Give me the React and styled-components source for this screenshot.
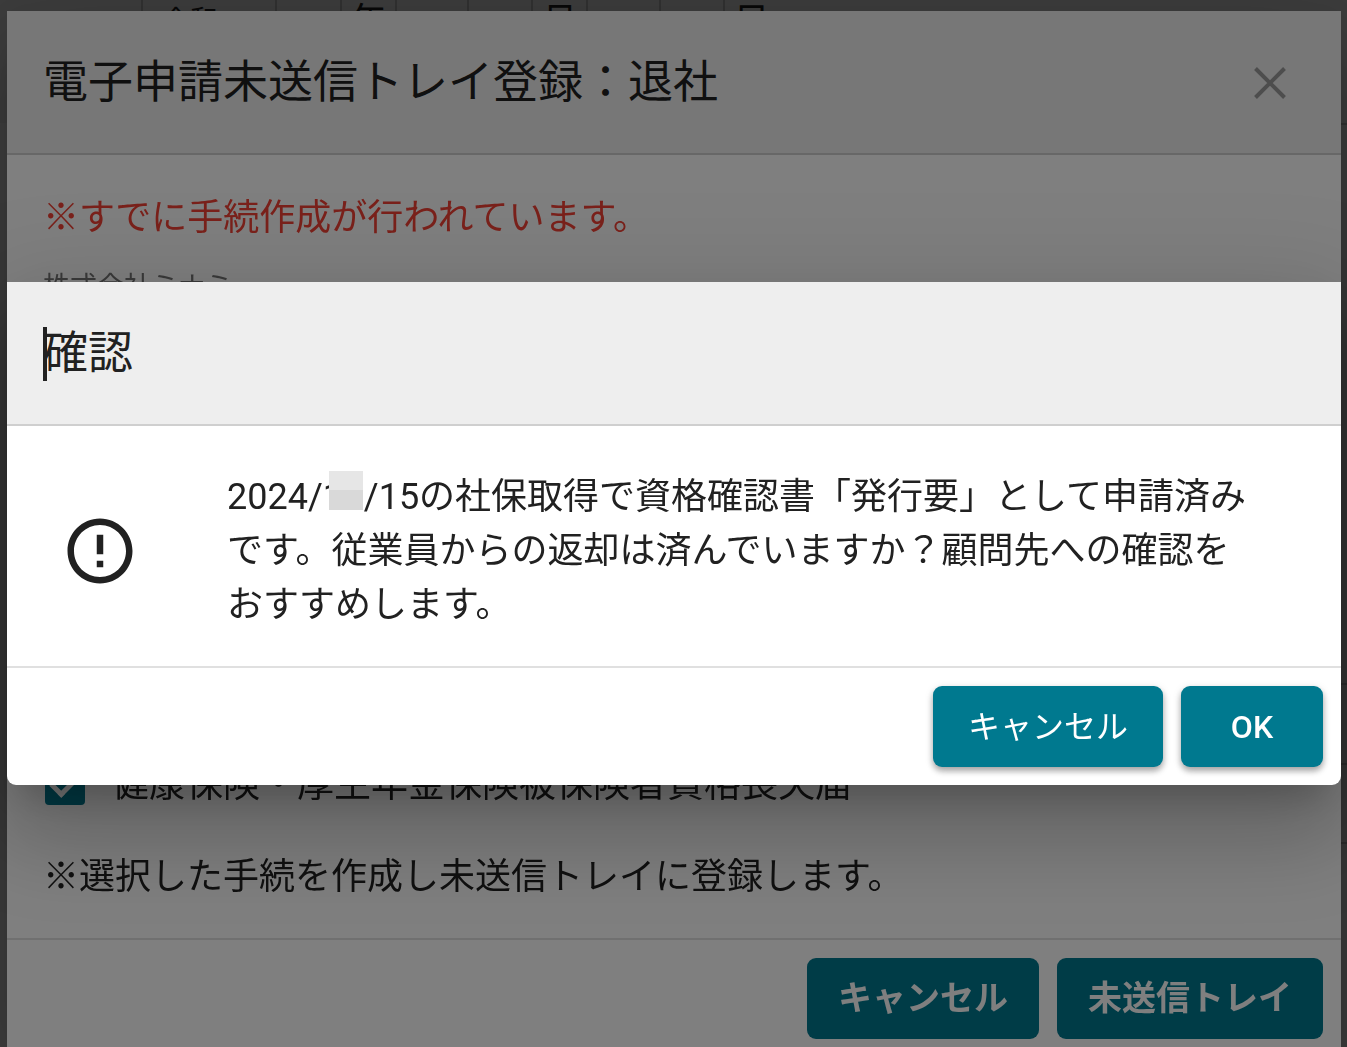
import React from 'react';
import styled, { createGlobalStyle } from 'styled-components';

const GlobalStyle = createGlobalStyle`
  * {
    box-sizing: border-box;
  }
  body {
    margin: 0;
    background: #fff;
    color: #212121;
    font-family: Roboto, "Noto Sans CJK JP", sans-serif;
    font-size: 36px;
    line-height: 54px;
  }
`;

const Page = styled.div`
  height: 100vh;
  overflow: hidden;
`;

const DateRow = styled.div`
  display: flex;
  height: 123px;
  padding-left: 141px;
  background: #f3f3f3;
  line-height: 44px;
`;

const DateCell = styled.div`
  width: ${({ $width }) => $width}px;
  height: 50px;
  padding-left: ${({ $era }) => ($era ? 19 : 0)}px;
  border-left: 2px solid #c4c4c4;
  font-size: ${({ $era }) => ($era ? 28 : 36)}px;
  text-align: ${({ $era }) => ($era ? 'left' : 'center')};
`;

const PageRow = styled.div`
  height: ${({ $height }) => $height}px;
  margin-left: 7px;
  border-top: 2px solid #c4c4c4;
  background: #f3f3f3;
`;

const Overlay = styled.div`
  position: fixed;
  inset: 0;
  display: flex;
  flex-direction: column;
  justify-content: ${({ $center }) => ($center ? 'center' : 'flex-start')};
  padding: ${({ $center }) => ($center ? '20px 6px 0 7px' : '11px 6px 0 7px')};
  background: rgba(0, 0, 0, 0.5);
  overflow: hidden;
`;

const Dialog = styled.section`
  display: flex;
  flex-direction: column;
  flex: ${({ $fill }) => ($fill ? '1' : 'none')};
  background: #fff;
  border-radius: ${({ $fill }) => ($fill ? '0' : '0 0 9px 9px')};
  box-shadow: 0 25px 34px -16px rgba(0, 0, 0, 0.2),
    0 54px 85px 7px rgba(0, 0, 0, 0.14),
    0 20px 103px 18px rgba(0, 0, 0, 0.12);
`;

const DialogHeader = styled.header`
  display: flex;
  justify-content: space-between;
  align-items: center;
  height: 144px;
  padding: 2px 44px 0 36px;
  background: #eee;
  border-bottom: 2px solid #cfcfcf;
`;

const Title = styled.h2`
  margin: 0;
  font-size: 45px;
  font-weight: 400;
  line-height: 54px;
`;

const Caret = styled.span`
  position: absolute;
  width: 4px;
  height: 54px;
  background: #212121;
`;

const CloseButton = styled.button`
  display: flex;
  padding: 0;
  border: 0;
  background: none;
  color: #9b9b9b;
`;

const FormBody = styled.div`
  display: flex;
  flex: 1;
  flex-direction: column;
  padding: 36px 36px 34px;
`;

const Warning = styled.p`
  margin: 0;
  color: #f44336;
`;

const Company = styled.p`
  margin: 22px 0 auto;
  color: #757575;
  font-size: 27px;
  line-height: 40px;
`;

const CheckRow = styled.label`
  display: flex;
  align-items: center;
  gap: 27px;
  margin-bottom: 38px;
  font-size: 37px;
`;

const Checkbox = styled.input`
  appearance: none;
  width: 40px;
  height: 40px;
  margin: 0 0 0 2px;
  border-radius: 4px;
  background: #00798f;
  display: grid;
  place-items: center;
  &:checked::before {
    content: "";
    width: 12px;
    height: 24px;
    margin-bottom: 8px;
    border: solid #fff;
    border-width: 0 5px 5px 0;
    transform: rotate(45deg);
  }
`;

const Note = styled.p`
  margin: 0;
`;

const DialogFooter = styled.footer`
  display: flex;
  justify-content: flex-end;
  gap: 18px;
  padding: 18px 18px ${({ $tight }) => ($tight ? 8 : 18)}px;
  border-top: 2px solid #e0e0e0;
`;

const Button = styled.button`
  min-width: 142px;
  height: 81px;
  padding: 0 ${({ $strong }) => ($strong ? 31 : 35)}px ${({ $medium }) => ($medium ? 0 : 6)}px;
  border: 0;
  border-radius: 9px;
  background: #00798f;
  color: #fff;
  font-family: inherit;
  font-size: ${({ $strong }) => ($strong ? 34 : 32)}px;
  font-weight: ${({ $strong, $medium }) => ($strong ? 700 : $medium ? 500 : 400)};
  box-shadow: ${({ $strong }) =>
    $strong ? 'none' : '0 4px 6px rgba(0, 0, 0, 0.3), 0 2px 10px rgba(0, 0, 0, 0.12)'};
`;

const MessageBody = styled.div`
  display: flex;
  align-items: center;
  gap: 88px;
  padding: 44px 80px 34px 54px;
`;

const Message = styled.p`
  flex: 1;
  margin: 0;
`;

const MaskedMonth = styled.span`
  display: inline-block;
  position: relative;
  width: 41px;
  &::after {
    content: "";
    position: absolute;
    top: 1px;
    left: 6px;
    width: 34px;
    height: 39px;
    background: linear-gradient(#e6e6e6 19px, #d9d9d9 19px);
  }
`;

const CloseIcon = () => (
  <svg width="54" height="54" viewBox="0 0 54 54" aria-hidden="true">
    <path d="M12.5 12.5L41.5 41.5M41.5 12.5L12.5 41.5" stroke="currentColor" strokeWidth="4" />
  </svg>
);

const AlertIcon = () => (
  <svg width="78" height="78" viewBox="0 0 24 24" fill="#212121" aria-hidden="true">
    <path d="M11 15h2v2h-2zm0-8h2v6h-2zm.99-5C6.47 2 2 6.48 2 12s4.47 10 9.99 10C17.52 22 22 17.52 22 12S17.52 2 11.99 2zM12 20c-4.42 0-8-3.58-8-8s3.58-8 8-8 8 3.58 8 8-3.58 8-8 8z" />
  </svg>
);

const dateCells = [
  { text: '令和', width: 134, era: true },
  { text: '', width: 65 },
  { text: '年', width: 55 },
  { text: '', width: 72 },
  { text: '', width: 64 },
  { text: '月', width: 55 },
  { text: '', width: 73 },
  { text: '', width: 64 },
  { text: '日', width: 55 },
];

const rowHeights = [560, 80, 79, 205];

const App = () => {
  return (
    <Page>
      <GlobalStyle />
      <DateRow>
        {dateCells.map(({ text, width, era }, i) => (
          <DateCell key={i} $width={width} $era={era}>{text}</DateCell>
        ))}
      </DateRow>
      {rowHeights.map((height, i) => (
        <PageRow key={i} $height={height} />
      ))}
      <Overlay>
        <Dialog $fill>
          <DialogHeader>
            <Title>電子申請未送信トレイ登録：退社</Title>
            <CloseButton aria-label="閉じる"><CloseIcon /></CloseButton>
          </DialogHeader>
          <FormBody>
            <Warning>※すでに手続作成が行われています。</Warning>
            <Company>株式会社ミナミ</Company>
            <CheckRow>
              <Checkbox type="checkbox" defaultChecked />
              健康保険・厚生年金保険被保険者資格喪失届
            </CheckRow>
            <Note>※選択した手続を作成し未送信トレイに登録します。</Note>
          </FormBody>
          <DialogFooter $tight>
            <Button $strong>キャンセル</Button>
            <Button $strong>未送信トレイ</Button>
          </DialogFooter>
        </Dialog>
      </Overlay>
      <Overlay $center>
        <Dialog role="dialog" aria-labelledby="confirm-title">
          <DialogHeader>
            <Title id="confirm-title"><Caret />確認</Title>
          </DialogHeader>
          <MessageBody>
            <AlertIcon />
            <Message>
              2024/<MaskedMonth>1</MaskedMonth>/15の社保取得で資格確認書「発行要」として申請済みです。従業員からの返却は済んでいますか？顧問先への確認をおすすめします。
            </Message>
          </MessageBody>
          <DialogFooter>
            <Button>キャンセル</Button>
            <Button $medium>OK</Button>
          </DialogFooter>
        </Dialog>
      </Overlay>
    </Page>
  );
};

export default App;
